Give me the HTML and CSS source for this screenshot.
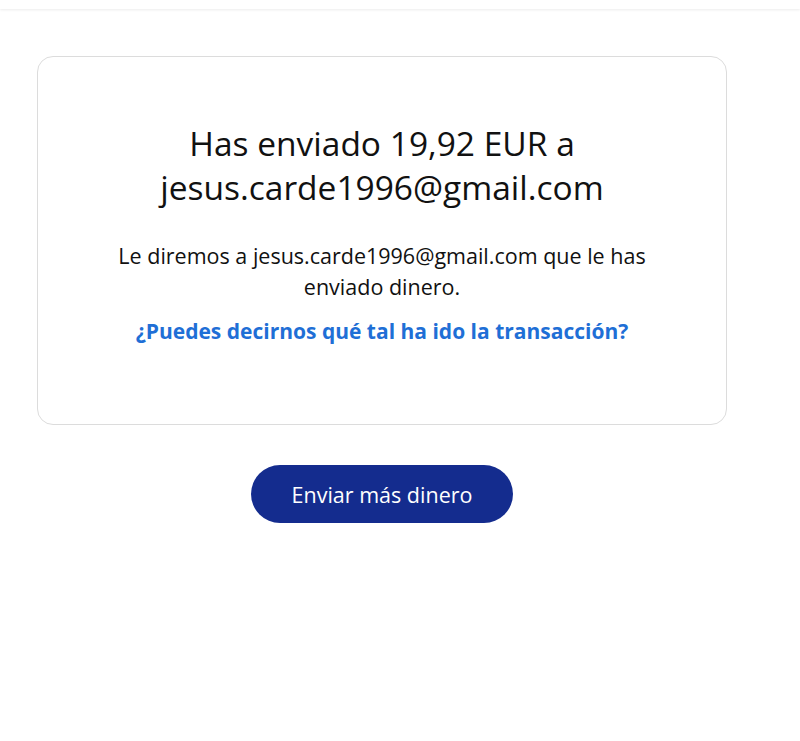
FILE: index.html
```html
<!DOCTYPE html>
<html>
<head>
<meta name="viewport" content="width=device-width, initial-scale=1">
<link rel="stylesheet" href="styles.css">
</head>
<body>
  <!-- Top bar with a soft shadow -->
  <div class="topbar"></div>

  <div class="page">
    <!-- Confirmation card -->
    <div class="card">
      <h1 class="title">Has enviado 19,92 EUR a<br>jesus.carde1996@gmail.com</h1>
      <p class="note">Le diremos a jesus.carde1996@gmail.com que le has<br>enviado dinero.</p>
      <a class="feedback" href="#">¿Puedes decirnos qué tal ha ido la transacción?</a>
    </div>

    <!-- Main action -->
    <div class="actions">
      <button class="send-more">Enviar más dinero</button>
    </div>
  </div>
</body>
</html>
```

FILE: styles.css
```css
/* Base page */
body {
    margin: 0;
    font-family: "Open Sans", Arial, sans-serif;
    background-color: #fff;
    color: #111;
}

/* Thin bar at the top of the window */
.topbar {
    height: 9px;
    background-color: #fff;
    box-shadow: 0 1px 3px rgba(0, 0, 0, 0.08);
}

.page {
    width: 690px;
    margin-left: 37px;
    padding-top: 47px;
}

/* The white box with the message */
.card {
    box-sizing: border-box;
    height: 369px;
    border: 1px solid #dcdcdc;
    border-radius: 16px;
    padding-top: 64px;
    text-align: center;
}

.title {
    margin: 0;
    font-size: 33.5px;
    font-weight: 400;
    line-height: 44px;
}

.note {
    margin: 31px 0 0;
    font-size: 21.5px;
    line-height: 31px;
}

.feedback {
    display: inline-block;
    margin-top: 14px;
    font-size: 21px;
    font-weight: 700;
    line-height: 30px;
    color: #1f6fd6;
    text-decoration: none;
}

/* Button under the card */
.actions {
    display: flex;
    justify-content: center;
    margin-top: 40px;
}

.send-more {
    width: 262px;
    height: 58px;
    border: none;
    border-radius: 29px;
    background-color: #142c8e;
    color: #fff;
    font-family: "Open Sans", Arial, sans-serif;
    font-size: 21.5px;
    cursor: pointer;
}
```
